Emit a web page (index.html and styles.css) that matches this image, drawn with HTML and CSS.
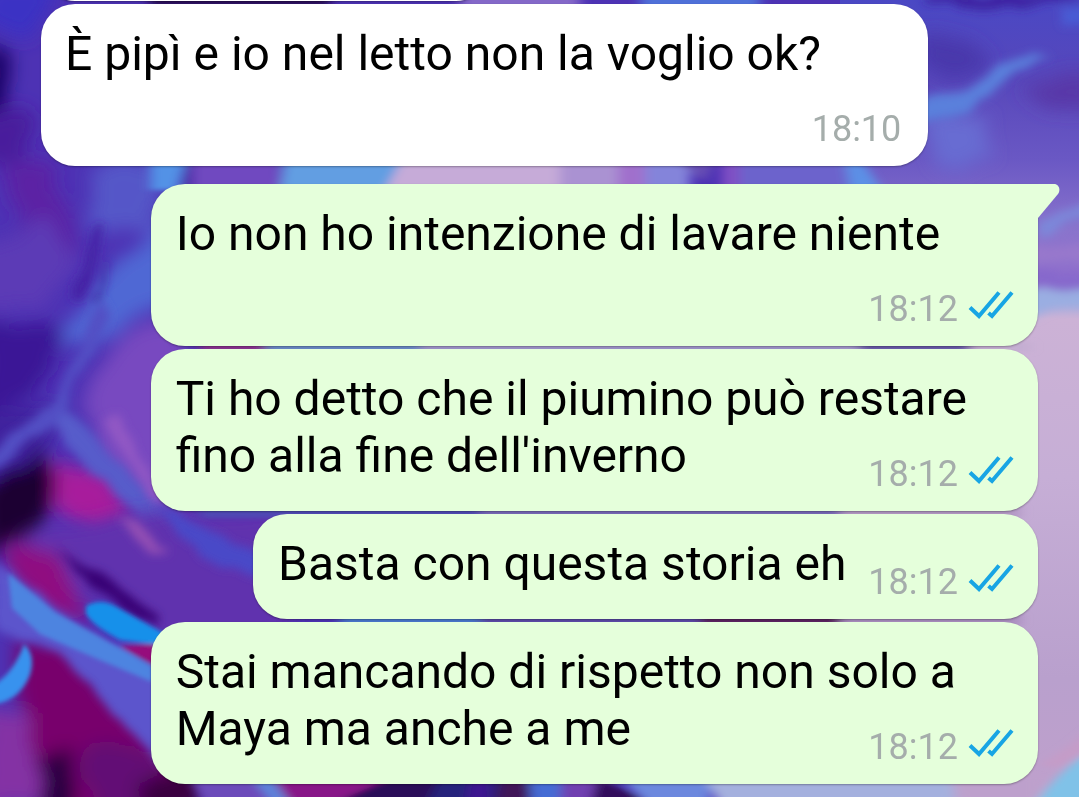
FILE: index.html
```
<!DOCTYPE html>
<html lang="it">
<head>
    <meta charset="UTF-8">
    <meta name="viewport" content="width=device-width, initial-scale=1">
    <title>Chat</title>
    <link rel="stylesheet" href="styles.css">
</head>
<body>
    <svg class="wallpaper" viewBox="0 0 1079 797" preserveAspectRatio="none" aria-hidden="true">
        <defs>
            <filter id="soft" x="-20%" y="-20%" width="140%" height="140%">
                <feTurbulence type="fractalNoise" baseFrequency="0.02" numOctaves="3" seed="4" result="noise"/>
                <feDisplacementMap in="SourceGraphic" in2="noise" scale="30" xChannelSelector="R" yChannelSelector="G"/>
                <feGaussianBlur stdDeviation="9"/>
            </filter>
            <filter id="brush" x="-20%" y="-20%" width="140%" height="140%">
                <feTurbulence type="fractalNoise" baseFrequency="0.03" numOctaves="3" seed="9" result="noise"/>
                <feDisplacementMap in="SourceGraphic" in2="noise" scale="14" xChannelSelector="R" yChannelSelector="G"/>
                <feGaussianBlur stdDeviation="5"/>
            </filter>
            <filter id="fine" x="-20%" y="-20%" width="140%" height="140%"><feGaussianBlur stdDeviation="2"/></filter>
            <filter id="strip" x="-20%" y="-20%" width="140%" height="140%"><feGaussianBlur stdDeviation="6 2"/></filter>
            <linearGradient id="right" x1="0" y1="0" x2="0" y2="1">
                <stop offset="0" stop-color="#4a48c4"/>
                <stop offset="0.1" stop-color="#5747bb"/>
                <stop offset="0.2" stop-color="#6a58c4"/>
                <stop offset="0.29" stop-color="#8a74cc"/>
                <stop offset="0.345" stop-color="#8f6fcc"/>
                <stop offset="0.37" stop-color="#9aa8e0"/>
                <stop offset="0.4" stop-color="#ccb2d6"/>
                <stop offset="0.6" stop-color="#c6aed6"/>
                <stop offset="0.85" stop-color="#b9a0cd"/>
                <stop offset="1" stop-color="#bfa0cc"/>
            </linearGradient>
        </defs>
        <rect width="1079" height="797" fill="#4d32b4"/>
        <rect x="840" width="239" height="797" fill="url(#right)"/>

        <!-- left edge, upper half -->
        <g filter="url(#soft)">
            <path d="M-20 -20H60L30 40L-20 20Z" fill="#3a30c4"/>
            <ellipse cx="-4" cy="80" rx="12" ry="38" fill="#1c0466"/>
            <path d="M-20 120L30 120L20 165L-20 160Z" fill="#4a1c9c"/>
            <path d="M0 165H60L75 250L20 260Z" fill="#5c24a4"/>
            <path d="M-20 250L40 225L80 260L40 310L-20 310Z" fill="#5c3ab6"/>
            <path d="M85 170L160 160V235L90 225Z" fill="#5456c8"/>
            <path d="M170 220L170 300L100 340L50 350L100 285Z" fill="#5068d4"/>
            <path d="M-20 320L60 330L50 380L-20 430Z" fill="#3a1496"/>
            <path d="M180 320L180 550L100 460L75 410L120 340Z" fill="#7848c0"/>
            <path d="M-20 420L60 400L40 470L-20 480Z" fill="#3f229e"/>
            <path d="M-20 490L40 448L62 468L40 550L-20 550Z" fill="#1e0232"/>
            <path d="M60 455L110 475L130 520L95 535L55 505Z" fill="#a81c9c"/>
        </g>
        <g filter="url(#brush)">
            <path d="M95 225L103 225L86 300L72 298Z" fill="#4422a4"/>
            <path d="M102 300L108 320L62 415L-10 475V452L56 400Z" fill="#5250c4"/>
            <path d="M108 260L112 262L98 302L95 300Z" fill="#3c1c98"/>
            <path d="M62 410L72 412L130 475L190 540L160 538L100 480L52 425Z" fill="#575cca"/>
            <path d="M105 420L118 415L160 490L160 510Z" fill="#9258c4"/>
        </g>

        <!-- left edge, lower half -->
        <g filter="url(#soft)">
            <path d="M20 540L150 510H290V640H160Z" fill="#6130ae"/>
            <path d="M5 545L60 555L95 620L60 625L10 580Z" fill="#900c80"/>
            <path d="M20 640L60 640L180 760L180 810H20Z" fill="#78066c"/>
            <path d="M-20 710L25 710L45 810H-20Z" fill="#8430a4"/>
            <path d="M38 755L80 750L75 820H40Z" fill="#280040"/>
            <path d="M90 740L160 755L150 820H95Z" fill="#620a74"/>
            <path d="M140 780L200 770V820H140Z" fill="#3a0040"/>
        </g>
        <g filter="url(#brush)">
            <path d="M60 552L110 580L160 618V626L120 610L75 570Z" fill="#380674"/>
            <path d="M115 520L135 520L170 550L150 548Z" fill="#9450b4"/>
            <path d="M150 505L190 520L270 560V584L200 555Z" fill="#4a4ac8"/>
            <path d="M-5 562L12 572L55 612L165 672V768L128 728L60 655L-5 630Z" fill="#5c54cc"/>
        </g>
        <g filter="url(#fine)">
            <path d="M8 573L55 612L152 666V682L95 658L40 634L12 608Z" fill="#4a8ce4" opacity="0.85"/>
            <path d="M86 606Q100 598 115 606L165 634V646L120 640Q92 625 86 614Z" fill="#1690ea"/>
            <path d="M120 646L155 644V666Z" fill="#96107c"/>
            <path d="M24 644Q36 655 30 675Q20 700 -5 704V684Q14 672 24 644Z" fill="#3892ee"/>
        </g>

        <!-- strips seen between the bubbles -->
        <g filter="url(#strip)">
            <path d="M150 -5H330V6H150Z" fill="#2c0c58"/>
            <path d="M460 -5H580V8H460Z" fill="#8468c8"/>
            <path d="M640 -5H760V8H640Z" fill="#5070d8"/>
            <path d="M150 160H186L178 190H150Z" fill="#5292e6"/>
            <path d="M186 160H192V190H184Z" fill="#42249e"/>
            <path d="M192 160H280V190H192Z" fill="#7048c0"/>
            <path d="M284 160H405L385 190H280Z" fill="#629ee2"/>
            <path d="M402 160H575V190H385Z" fill="#c6abd8"/>
            <path d="M560 160H630V190H560Z" fill="#aa92d2"/>
            <path d="M618 160H645V190H618Z" fill="#a070cc"/>
            <path d="M645 160H690V190H645Z" fill="#8484da"/>
            <path d="M676 160H716L704 182Z" fill="#664eb4"/>
            <path d="M722 160H740V190H722Z" fill="#8050c4"/>
            <path d="M740 160H850V190H740Z" fill="#6c64cc"/>
            <path d="M845 160L866 166L882 190H850Z" fill="#5c90e6"/>
            <path d="M200 342H265V352H200Z" fill="#8c3090"/>
            <path d="M265 342H420V352H265Z" fill="#6a8cc8"/>
            <path d="M420 342H860V352H420Z" fill="#a398cc"/>
            <path d="M860 342H970V352H860Z" fill="#6858a8"/>
            <path d="M970 342H1030V352H970Z" fill="#c4aed2"/>
            <path d="M200 506H480V518H200Z" fill="#5048b4"/>
            <path d="M480 506H840V518H480Z" fill="#7868b8"/>
            <path d="M840 506H1020V518H840Z" fill="#b298c4"/>
            <path d="M340 614H480V626H340Z" fill="#4878cc"/>
            <path d="M480 614H700V626H480Z" fill="#5c48a8"/>
            <path d="M700 614H840V626H700Z" fill="#5c2060"/>
            <path d="M840 614H1020V626H840Z" fill="#a88cbe"/>
        </g>

        <!-- bottom strip -->
        <g filter="url(#strip)">
            <path d="M190 778H290V805H205Z" fill="#6c4cba"/>
            <path d="M252 778L270 778L292 805H274Z" fill="#5c84dc"/>
            <path d="M275 778H390L340 805H290Z" fill="#881888"/>
            <path d="M390 778H450V805H330Z" fill="#2c0c58"/>
            <path d="M440 778H530V805H425Z" fill="#28207c"/>
            <path d="M470 778H490V805H465Z" fill="#3c1890"/>
            <path d="M500 778H530V805H495Z" fill="#401458"/>
            <path d="M528 778H565V805H532Z" fill="#446cd4"/>
            <path d="M562 778H612V805H560Z" fill="#7040b0"/>
            <path d="M598 778L640 797V805H590Z" fill="#300c5c"/>
            <path d="M620 778H710V805H650Z" fill="#6c88de"/>
            <path d="M705 778H955V805H720Z" fill="#a4b0de"/>
            <path d="M950 778H1040V805H960Z" fill="#bda0cc"/>
            <path d="M1095 748Q1060 768 1030 810H1095Z" fill="#80c2e8"/>
            <path d="M1095 725L1070 745L1040 765L1056 768L1095 750Z" fill="#c49cc8"/>
        </g>

        <!-- right edge -->
        <g filter="url(#soft)">
            <path d="M925 35H970L990 60L960 78H925Z" fill="#4a38ac"/>
            <path d="M1020 85L1095 70V110L1040 108Z" fill="#5838a8"/>
            <path d="M930 120L985 118L995 160H930Z" fill="#686cd2"/>
        </g>
        <g filter="url(#brush)">
            <path d="M925 -5H1095L1040 6Q980 10 925 2Z" fill="#3c24a0"/>
            <path d="M920 97L965 90Q985 75 1000 62L1050 55Q985 90 968 115L920 125Z" fill="#5a80dc"/>
            <path d="M1060 8L1095 2V28L1062 24Z" fill="#4a5cd4"/>
            <path d="M1040 222L1095 200V212L1040 236Z" fill="#7c88da"/>
            <path d="M1030 244H1095V262H1030Z" fill="#9878cc"/>
            <path d="M1030 272H1095V284L1030 290Z" fill="#8668cc"/>
            <path d="M1030 294L1095 286V306L1030 314Z" fill="#9aaee2"/>
        </g>
    </svg>

    <main class="chat">
        <div class="bubble received first"></div>
        <div class="bubble received">
            <p class="text">È pipì e io nel letto non la voglio ok?
                <span class="meta"><time>18:10</time></span>
            </p>
        </div>
        <div class="bubble sent tail">
            <svg class="corner" viewBox="0 0 22 34" aria-hidden="true"><path d="M0 0H16C21 0 23 6 20 10L0 34Z"/></svg>
            <p class="text">Io non ho intenzione di lavare niente
                <span class="meta"><time>18:12</time><svg class="ticks" viewBox="0 0 46 32" role="img" aria-label="Letto"><path d="M2 18.500L11 27L31 3.500M20.500 24L24 27L44 3.500"/></svg></span>
            </p>
        </div>
        <div class="bubble sent">
            <p class="text">Ti ho detto che il piumino può restare fino alla fine dell'inverno
                <span class="meta"><time>18:12</time><svg class="ticks" viewBox="0 0 46 32" role="img" aria-label="Letto"><path d="M2 18.500L11 27L31 3.500M20.500 24L24 27L44 3.500"/></svg></span>
            </p>
        </div>
        <div class="bubble sent">
            <p class="text">Basta con questa storia eh
                <span class="meta"><time>18:12</time><svg class="ticks" viewBox="0 0 46 32" role="img" aria-label="Letto"><path d="M2 18.500L11 27L31 3.500M20.500 24L24 27L44 3.500"/></svg></span>
            </p>
        </div>
        <div class="bubble sent">
            <p class="text">Stai mancando di rispetto non solo a Maya ma anche a me
                <span class="meta"><time>18:12</time><svg class="ticks" viewBox="0 0 46 32" role="img" aria-label="Letto"><path d="M2 18.500L11 27L31 3.500M20.500 24L24 27L44 3.500"/></svg></span>
            </p>
        </div>
    </main>
</body>
</html>
```
FILE: styles.css
```
* {
    box-sizing: border-box;
}

body {
    font-family: Roboto, sans-serif;
    color: #000;
    background: #4d32b4;
    margin: 0;
    height: 100vh;
    overflow: hidden;
}

.wallpaper {
    position: fixed;
    top: 0;
    left: 0;
    width: 100%;
    height: 100%;
    z-index: -1;
}

.chat {
    display: flex;
    flex-direction: column;
    justify-content: flex-end;
    gap: 3px;
    height: 100%;
    padding: 0 41px 13px;
}

.bubble {
    position: relative;
    flex-shrink: 0;
    max-width: 89%;
    padding: 21px 24px 16px;
    border-radius: 34px;
    box-shadow: 0 1px 2px rgba(0, 0, 0, 0.3);
}

.received {
    align-self: flex-start;
    background: #fff;
    padding-right: 27px;
}

.sent {
    align-self: flex-end;
    background: #e5ffdb;
    padding-left: 25px;
}

.first {
    width: 45%;
    height: 105px;
}

.tail {
    margin-top: 15px;
    border-top-right-radius: 0;
}

.corner {
    position: absolute;
    top: 0;
    left: 100%;
    width: 22px;
    height: 34px;
    fill: #e5ffdb;
}

.text {
    display: flow-root;
    margin: 0;
    font-size: 48px;
    line-height: 57px;
}

.meta {
    float: right;
    margin: 26px 0 0 22px;
    font-size: 36px;
    line-height: 42px;
    color: #a5adab;
}

.ticks {
    width: 46px;
    height: 32px;
    margin-left: 10px;
    fill: none;
    stroke: #18a5e4;
    stroke-width: 4;
}
```
